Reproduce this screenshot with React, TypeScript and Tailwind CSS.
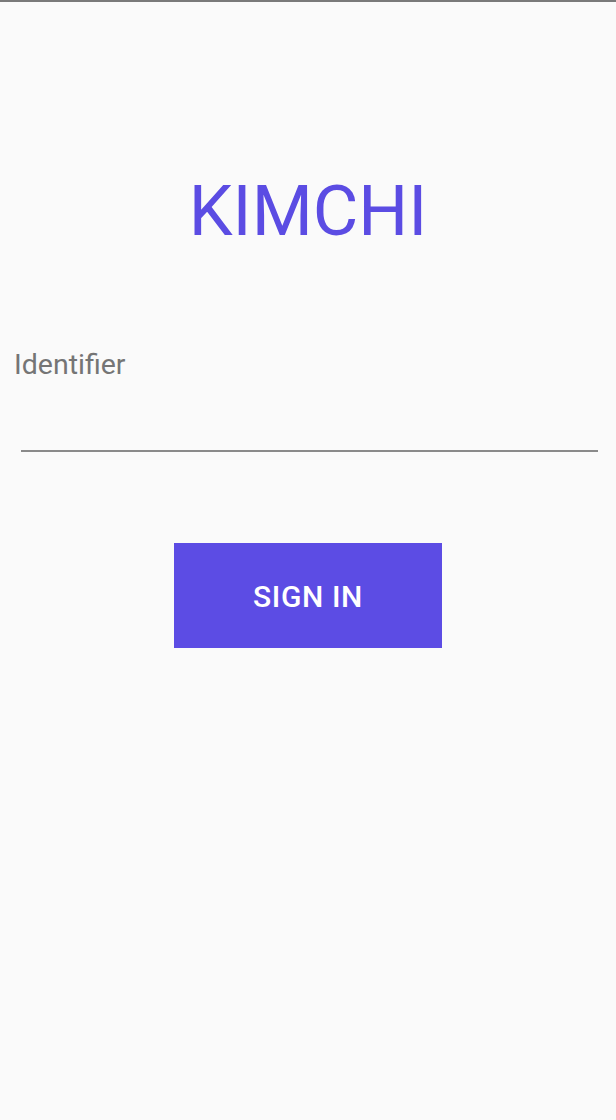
export default function App() {
  return (
    <div
      className="w-[616px] h-[1120px] bg-[#fafafa] border-t-2 border-[#7a7a7a] flex flex-col"
      style={{ fontFamily: 'Roboto, "Noto Sans", sans-serif' }}
    >
      <h1 className="mt-[164px] text-center text-[70px] leading-[90px] text-[#5b4ce3] font-normal">KIMCHI</h1>
      <label className="mt-[91px] ml-[14px] text-[28.5px] leading-[36px] text-[#757575]">Identifier</label>
      <div className="mt-[67px] mr-[18px] ml-[21px] h-[2px] bg-[#8a8a8a]" />
      <div className="flex justify-center mt-[91px]">
        <button className="w-[268px] h-[105px] bg-[#5c4ce4] pt-[2px] text-white text-[30px] font-medium tracking-[0.6px]">
          SIGN IN
        </button>
      </div>
    </div>
  );
}
